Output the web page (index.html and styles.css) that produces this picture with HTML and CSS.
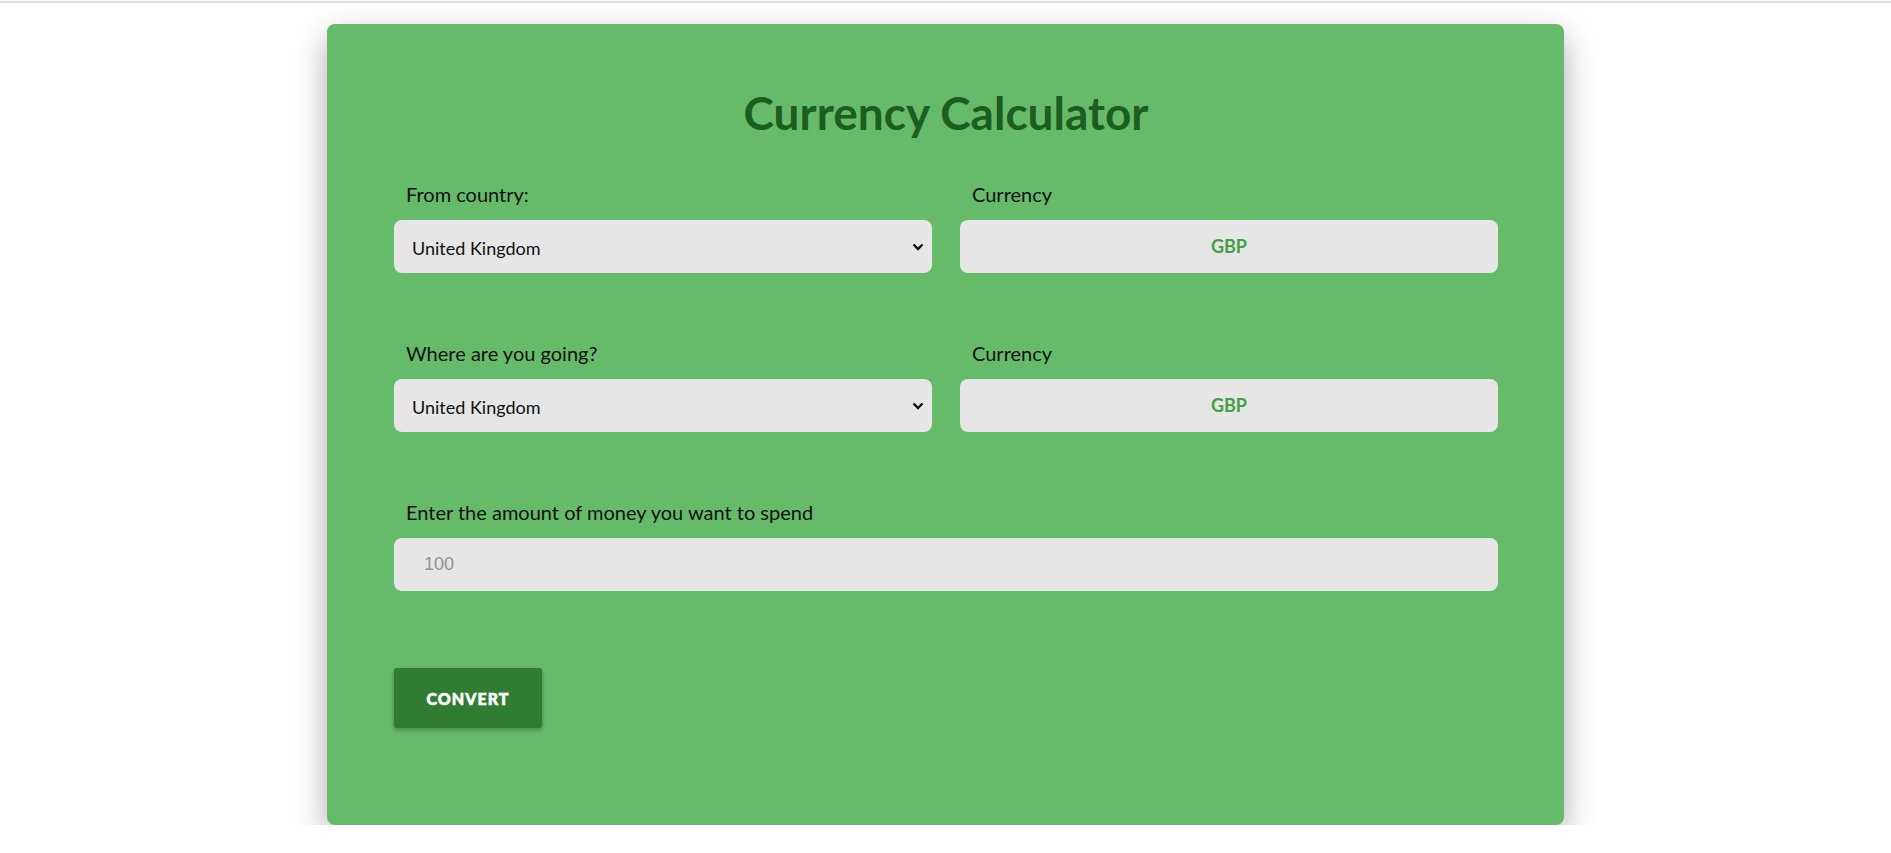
FILE: index.html
```html
<!DOCTYPE html>
<html lang="en">
<head>
<meta charset="utf-8">
<title>Currency Calculator</title>
<link rel="stylesheet" href="styles.css">
</head>
<body>
<div class="topline"></div>
<main class="card">
  <h1 class="title">Currency Calculator</h1>

  <div class="row">
    <div class="field">
      <label class="label" for="from">From country:</label>
      <div class="select-wrap">
        <select id="from" class="control select">
          <option>United Kingdom</option>
        </select>
        <svg class="chevron" width="12" height="8" viewBox="0 0 12 8"><path d="M1.5 1.5 L6 6 L10.5 1.5" fill="none" stroke="#111" stroke-width="2.4"/></svg>
      </div>
    </div>
    <div class="field">
      <span class="label">Currency</span>
      <div class="control currency">GBP</div>
    </div>
  </div>

  <div class="row">
    <div class="field">
      <label class="label" for="to">Where are you going?</label>
      <div class="select-wrap">
        <select id="to" class="control select">
          <option>United Kingdom</option>
        </select>
        <svg class="chevron" width="12" height="8" viewBox="0 0 12 8"><path d="M1.5 1.5 L6 6 L10.5 1.5" fill="none" stroke="#111" stroke-width="2.4"/></svg>
      </div>
    </div>
    <div class="field">
      <span class="label">Currency</span>
      <div class="control currency">GBP</div>
    </div>
  </div>

  <div class="row single">
    <div class="field">
      <label class="label" for="amount">Enter the amount of money you want to spend</label>
      <input id="amount" class="control amount" type="text" placeholder="100">
    </div>
  </div>

  <button class="convert" type="button">Convert</button>
</main>
</body>
</html>
```

FILE: styles.css
```css
html, body {
  margin: 0;
  padding: 0;
  background: #ffffff;
}

body {
  font-family: Lato, "Noto Sans", sans-serif;
  color: #111;
}

.topline {
  margin-top: 1px;
  height: 2px;
  background: #dedede;
}

.card {
  box-sizing: border-box;
  width: 1237px;
  margin: 21px auto 0;
  padding: 61px 66px 97px 67px;
  background: #66bb6a;
  border-radius: 8px;
  box-shadow: 0 12px 32px rgba(0, 0, 0, 0.32);
}

.title {
  margin: 0 0 42px;
  font-size: 46px;
  line-height: 55px;
  font-weight: 700;
  color: #1b5e20;
  text-align: center;
}

.row {
  display: grid;
  grid-template-columns: 1fr 1fr;
  column-gap: 28px;
  margin-bottom: 68px;
}

.row.single {
  grid-template-columns: 1fr;
  margin-bottom: 77px;
}

.field {
  display: flex;
  flex-direction: column;
}

.label {
  display: block;
  padding-left: 12px;
  margin-bottom: 14px;
  font-size: 20px;
  line-height: 24px;
  color: #111;
}

.control {
  box-sizing: border-box;
  width: 100%;
  height: 53px;
  border: none;
  border-radius: 8px;
  background: #e6e6e6;
  outline: none;
}

.select-wrap {
  position: relative;
}

.select {
  display: block;
  appearance: none;
  -webkit-appearance: none;
  padding: 2px 16px 0 18px;
  font-family: Lato, "Noto Sans", sans-serif;
  font-size: 18px;
  color: #111;
}

.chevron {
  position: absolute;
  right: 8px;
  top: 23px;
  pointer-events: none;
}

.currency {
  display: flex;
  align-items: center;
  justify-content: center;
  padding-bottom: 2px;
  font-size: 18px;
  font-weight: 700;
  color: #43a047;
}

.amount {
  padding: 0 30px;
  font-family: "Liberation Sans", Arial, sans-serif;
  font-size: 18px;
  color: #333;
}

.amount::placeholder {
  color: #919191;
}

.convert {
  display: block;
  width: 148px;
  height: 60px;
  border: none;
  border-radius: 3px;
  background: #2e7d32;
  color: #ffffff;
  font-family: Lato, "Noto Sans", sans-serif;
  font-weight: 900;
  font-size: 16px;
  letter-spacing: 1px;
  text-transform: uppercase;
  -webkit-text-stroke: 0.6px #ffffff;
  box-shadow: 0 2px 5px rgba(0, 0, 0, 0.3);
  cursor: pointer;
}
```
